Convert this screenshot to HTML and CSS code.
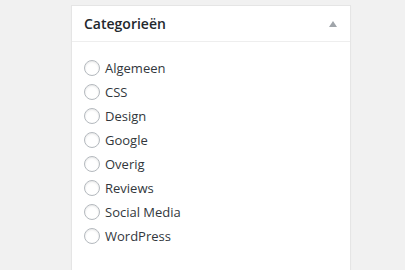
FILE: index.html
```html
<!DOCTYPE html>
<html lang="nl">
<head>
<meta charset="utf-8">
<link rel="stylesheet" href="styles.css">
</head>
<body>
<div class="page">
  <div class="postbox">
    <div class="hndle">
      <h2 class="title">Categorieën</h2>
      <span class="toggle"></span>
    </div>
    <ul class="checklist">
      <li><label><input type="radio" name="cat"><span>Algemeen</span></label></li>
      <li><label><input type="radio" name="cat"><span>CSS</span></label></li>
      <li><label><input type="radio" name="cat"><span>Design</span></label></li>
      <li><label><input type="radio" name="cat"><span>Google</span></label></li>
      <li><label><input type="radio" name="cat"><span>Overig</span></label></li>
      <li><label><input type="radio" name="cat"><span>Reviews</span></label></li>
      <li><label><input type="radio" name="cat"><span>Social Media</span></label></li>
      <li><label><input type="radio" name="cat"><span>WordPress</span></label></li>
    </ul>
  </div>
</div>
</body>
</html>
```

FILE: styles.css
```css
html, body {
  margin: 0;
  padding: 0;
  background: #f1f1f1;
  font-family: "Open Sans", "Liberation Sans", sans-serif;
  height: 100%;
  overflow: hidden;
}
.page {
  padding: 5px 0 0 71px;
  height: 100%;
  box-sizing: border-box;
}
.postbox {
  width: 280px;
  height: 100%;
  box-sizing: border-box;
  background: #fff;
  border: 1px solid #e5e5e5;
  border-bottom: none;
  box-shadow: 0 1px 1px rgba(0,0,0,.04);
}
.hndle {
  display: flex;
  align-items: center;
  justify-content: space-between;
  height: 35px;
  padding: 0 12px;
  border-bottom: 1px solid #eee;
}
.title {
  margin: 0;
  font-size: 14px;
  font-weight: 600;
  color: #23282d;
  line-height: 1.4;
}
.toggle {
  width: 0;
  height: 0;
  border-left: 4.5px solid transparent;
  border-right: 4.5px solid transparent;
  border-bottom: 6px solid #a0a5aa;
  margin-right: 1px;
  margin-top: 1px;
}
.checklist {
  list-style: none;
  margin: 0;
  padding: 14px 12px 0;
}
.checklist li {
  height: 24px;
  display: flex;
  align-items: center;
}
.checklist label {
  display: flex;
  align-items: center;
  gap: 5px;
  font-size: 13px;
  color: #32373c;
}
.checklist input {
  -webkit-appearance: none;
  appearance: none;
  margin: 0;
  width: 16px;
  height: 16px;
  border-radius: 50%;
  border: 1px solid #b4b9be;
  background: #fff;
  box-shadow: inset 0 1px 2px rgba(0,0,0,.1);
  box-sizing: border-box;
}
```
